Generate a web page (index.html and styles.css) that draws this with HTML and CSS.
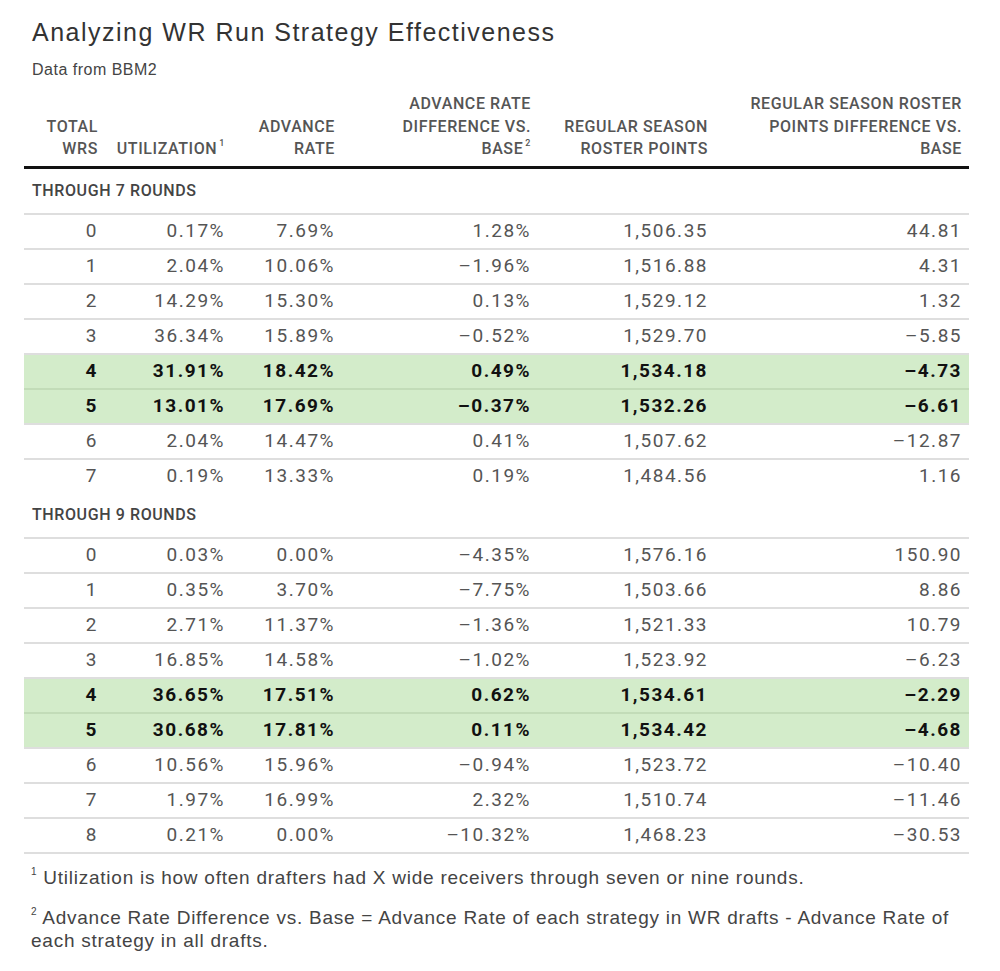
FILE: index.html
```html
<!DOCTYPE html>
<html lang="en">
<head>
<meta charset="utf-8">
<title>Analyzing WR Run Strategy Effectiveness</title>
<link rel="stylesheet" href="styles.css">
</head>
<body>
<div class="page">
  <h1 class="title">Analyzing WR Run Strategy Effectiveness</h1>
  <p class="subtitle">Data from BBM2</p>
  <table class="data">
    <colgroup>
      <col class="c1"><col class="c2"><col class="c3"><col class="c4"><col class="c5"><col class="c6">
    </colgroup>
    <thead>
      <tr>
        <th>TOTAL<br>WRS</th>
        <th>UTILIZATION<sup>1</sup></th>
        <th>ADVANCE<br>RATE</th>
        <th>ADVANCE RATE<br>DIFFERENCE VS.<br>BASE<sup>2</sup></th>
        <th>REGULAR SEASON<br>ROSTER POINTS</th>
        <th>REGULAR SEASON ROSTER<br>POINTS DIFFERENCE VS.<br>BASE</th>
      </tr>
    </thead>
    <tbody>
      <tr class="section"><td colspan="6">THROUGH 7 ROUNDS</td></tr>
      <tr><td>0</td><td>0.17%</td><td>7.69%</td><td>1.28%</td><td>1,506.35</td><td>44.81</td></tr>
      <tr><td>1</td><td>2.04%</td><td>10.06%</td><td>–1.96%</td><td>1,516.88</td><td>4.31</td></tr>
      <tr><td>2</td><td>14.29%</td><td>15.30%</td><td>0.13%</td><td>1,529.12</td><td>1.32</td></tr>
      <tr><td>3</td><td>36.34%</td><td>15.89%</td><td>–0.52%</td><td>1,529.70</td><td>–5.85</td></tr>
      <tr class="hl"><td>4</td><td>31.91%</td><td>18.42%</td><td>0.49%</td><td>1,534.18</td><td>–4.73</td></tr>
      <tr class="hl"><td>5</td><td>13.01%</td><td>17.69%</td><td>–0.37%</td><td>1,532.26</td><td>–6.61</td></tr>
      <tr><td>6</td><td>2.04%</td><td>14.47%</td><td>0.41%</td><td>1,507.62</td><td>–12.87</td></tr>
      <tr><td>7</td><td>0.19%</td><td>13.33%</td><td>0.19%</td><td>1,484.56</td><td>1.16</td></tr>
      <tr class="section"><td colspan="6">THROUGH 9 ROUNDS</td></tr>
      <tr><td>0</td><td>0.03%</td><td>0.00%</td><td>–4.35%</td><td>1,576.16</td><td>150.90</td></tr>
      <tr><td>1</td><td>0.35%</td><td>3.70%</td><td>–7.75%</td><td>1,503.66</td><td>8.86</td></tr>
      <tr><td>2</td><td>2.71%</td><td>11.37%</td><td>–1.36%</td><td>1,521.33</td><td>10.79</td></tr>
      <tr><td>3</td><td>16.85%</td><td>14.58%</td><td>–1.02%</td><td>1,523.92</td><td>–6.23</td></tr>
      <tr class="hl"><td>4</td><td>36.65%</td><td>17.51%</td><td>0.62%</td><td>1,534.61</td><td>–2.29</td></tr>
      <tr class="hl"><td>5</td><td>30.68%</td><td>17.81%</td><td>0.11%</td><td>1,534.42</td><td>–4.68</td></tr>
      <tr><td>6</td><td>10.56%</td><td>15.96%</td><td>–0.94%</td><td>1,523.72</td><td>–10.40</td></tr>
      <tr><td>7</td><td>1.97%</td><td>16.99%</td><td>2.32%</td><td>1,510.74</td><td>–11.46</td></tr>
      <tr class="last"><td>8</td><td>0.21%</td><td>0.00%</td><td>–10.32%</td><td>1,468.23</td><td>–30.53</td></tr>
    </tbody>
  </table>
  <div class="notes">
    <p class="note"><sup>1</sup> Utilization is how often drafters had X wide receivers through seven or nine rounds.</p>
    <p class="note"><sup>2</sup> Advance Rate Difference vs. Base = Advance Rate of each strategy in WR drafts - Advance Rate of each strategy in all drafts.</p>
  </div>
</div>
</body>
</html>
```

FILE: styles.css
```css
html, body {
  margin: 0;
  padding: 0;
  background: #ffffff;
}

.page {
  padding: 17px 0 0 24px;
  font-family: "Liberation Sans", Arial, sans-serif;
  color: #444;
}

.title {
  margin: 0 0 0 8px;
  font-family: "Liberation Sans", Arial, sans-serif;
  font-weight: 400;
  font-size: 25px;
  line-height: 30px;
  letter-spacing: 1.5px;
  color: #333;
}

.subtitle {
  margin: 13px 0 0 8px;
  font-size: 16px;
  line-height: 20px;
  color: #444;
  letter-spacing: 0.5px;
}

.data {
  width: 945px;
  border-collapse: collapse;
  table-layout: fixed;
  margin-top: 0;
}

.c1 { width: 81px; }
.c2 { width: 127px; }
.c3 { width: 110px; }
.c4 { width: 196px; }
.c5 { width: 177px; }
.c6 { width: 254px; }

.data th {
  font-family: "Roboto", "Liberation Sans", sans-serif;
  font-weight: 500;
  font-size: 16px;
  line-height: 22.5px;
  color: #555;
  text-align: right;
  vertical-align: bottom;
  padding: 0 7px 5px 0;
  border-bottom: 3px solid #111;
  letter-spacing: 0.6px;
}

.data th sup {
  font-size: 9px;
  line-height: 0;
  vertical-align: 8px;
  margin-left: 2px;
}

.data thead tr {
  height: 87px;
}

.data td {
  font-family: "Roboto", "Liberation Sans", sans-serif;
  font-size: 19px;
  color: #555;
  text-align: right;
  padding: 0 7px 0 0;
  height: 33px;
  border-top: 2px solid #dedede;
  letter-spacing: 1.5px;
  line-height: 20px;
}

.data tr.section td {
  border-top: none;
  height: 44px;
  text-align: left;
  padding: 0 0 0 8px;
  font-size: 16px;
  font-weight: 500;
  letter-spacing: 0.6px;
  color: #444;
}

.data tr.hl td {
  background: #d3ecca;
  font-weight: 700;
  color: #111;
}

.data tr.hl + tr.hl td {
  border-top-color: #c2dcb8;
}

.data tr.last td {
  border-bottom: 2px solid #dedede;
}

.notes {
  padding: 12px 0 0 7px;
  font-family: "Liberation Sans", Arial, sans-serif;
  font-size: 19px;
  line-height: 23px;
  color: #444;
  letter-spacing: 0.75px;
}

.note {
  margin: 0 0 17px 0;
  width: 955px;
}

.notes sup {
  font-size: 10px;
  vertical-align: 9px;
  line-height: 0;
}
```
